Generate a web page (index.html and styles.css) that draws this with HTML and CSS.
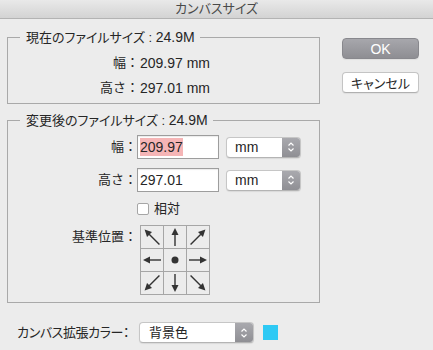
FILE: index.html
```html
<!DOCTYPE html>
<html lang="ja">
<head>
    <meta charset="UTF-8">
    <meta name="viewport" content="width=device-width, initial-scale=1.0">
    <title>カンバスサイズ</title>
    <link rel="stylesheet" href="styles.css">
</head>
<body>
    <div class="titlebar">カンバスサイズ</div>
    <div class="dialog">
        <div class="main">
            <fieldset class="group group-current">
                <legend><span class="kana">現在のファイルサイズ</span> : <span class="num">24.9M</span></legend>
                <div class="info-row">
                    <span class="info-label">幅：</span>
                    <span class="num">209.97 mm</span>
                </div>
                <div class="info-row">
                    <span class="info-label">高さ：</span>
                    <span class="num">297.01 mm</span>
                </div>
            </fieldset>

            <fieldset class="group group-new">
                <legend><span class="kana">変更後のファイルサイズ</span> : <span class="num">24.9M</span></legend>
                <div class="field-row">
                    <label class="field-label">幅：</label>
                    <div class="field"><span class="selected">209.97</span></div>
                    <div class="select select-unit">
                        <span>mm</span>
                        <span class="stepper">
                            <svg width="8" height="12" viewBox="0 0 8 12"><path d="M1.5 4.5L4 2l2.5 2.5M1.5 7.5L4 10l2.5-2.5" fill="none" stroke="#fff" stroke-width="1.2"/></svg>
                        </span>
                    </div>
                </div>
                <div class="field-row">
                    <label class="field-label">高さ：</label>
                    <div class="field"><span>297.01</span></div>
                    <div class="select select-unit">
                        <span>mm</span>
                        <span class="stepper">
                            <svg width="8" height="12" viewBox="0 0 8 12"><path d="M1.5 4.5L4 2l2.5 2.5M1.5 7.5L4 10l2.5-2.5" fill="none" stroke="#fff" stroke-width="1.2"/></svg>
                        </span>
                    </div>
                </div>
                <div class="check-row">
                    <span class="checkbox"></span>
                    <span>相対</span>
                </div>
                <div class="anchor-row">
                    <span class="field-label anchor-label">基準位置：</span>
                    <div class="anchor-grid">
                        <div class="cell"><svg viewBox="0 0 22 22"><g transform="rotate(-45 11 11)"><path d="M11 21.5V7" class="shaft"/><path d="M11 0.5l-3.5 7h7z"/></g></svg></div>
                        <div class="cell"><svg viewBox="0 0 22 22"><path d="M11 20V8" class="shaft"/><path d="M11 2l-3.5 7h7z"/></svg></div>
                        <div class="cell"><svg viewBox="0 0 22 22"><g transform="rotate(45 11 11)"><path d="M11 21.5V7" class="shaft"/><path d="M11 0.5l-3.5 7h7z"/></g></svg></div>
                        <div class="cell"><svg viewBox="0 0 22 22"><g transform="rotate(-90 11 11)"><path d="M11 20V8" class="shaft"/><path d="M11 2l-3.5 7h7z"/></g></svg></div>
                        <div class="cell"><svg viewBox="0 0 22 22"><circle cx="11" cy="11" r="3.5"/></svg></div>
                        <div class="cell"><svg viewBox="0 0 22 22"><g transform="rotate(90 11 11)"><path d="M11 20V8" class="shaft"/><path d="M11 2l-3.5 7h7z"/></g></svg></div>
                        <div class="cell"><svg viewBox="0 0 22 22"><g transform="rotate(-135 11 11)"><path d="M11 21.5V7" class="shaft"/><path d="M11 0.5l-3.5 7h7z"/></g></svg></div>
                        <div class="cell"><svg viewBox="0 0 22 22"><g transform="rotate(180 11 11)"><path d="M11 20V8" class="shaft"/><path d="M11 2l-3.5 7h7z"/></g></svg></div>
                        <div class="cell"><svg viewBox="0 0 22 22"><g transform="rotate(135 11 11)"><path d="M11 21.5V7" class="shaft"/><path d="M11 0.5l-3.5 7h7z"/></g></svg></div>
                    </div>
                </div>
            </fieldset>

            <div class="extend-row">
                <span class="kana extend-label">カンバス拡張カラー：</span>
                <div class="select select-color">
                    <span>背景色</span>
                    <span class="stepper">
                        <svg width="8" height="12" viewBox="0 0 8 12"><path d="M1.5 4.5L4 2l2.5 2.5M1.5 7.5L4 10l2.5-2.5" fill="none" stroke="#fff" stroke-width="1.2"/></svg>
                    </span>
                </div>
                <span class="swatch"></span>
            </div>
        </div>

        <div class="actions">
            <button type="button" class="btn btn-ok">OK</button>
            <button type="button" class="btn"><span class="kana">キャンセル</span></button>
        </div>
    </div>
</body>
</html>
```

FILE: styles.css
```css
body {
    margin: 0;
    width: 433px;
    height: 350px;
    overflow: hidden;
    background: #ececec;
    font-family: "Liberation Sans", "Noto Sans CJK JP", sans-serif;
    font-size: 13px;
    line-height: 16px;
    color: #262626;
}
.kana {
    font-feature-settings: "palt";
}
.num {
    font-size: 14px;
}
.titlebar {
    height: 18px;
    line-height: 18px;
    text-align: center;
    color: #4a4a4a;
    background: linear-gradient(#e9e9e9, #d3d3d3);
    border-bottom: 1px solid #b3b3b3;
    font-feature-settings: "palt";
}
.dialog {
    display: flex;
}
.main {
    width: 313px;
    margin-left: 7px;
}
.group {
    margin: 0;
    padding: 0;
    border: 1px solid #a9a9a9;
}
.group legend {
    margin-left: 12px;
    padding: 0 5px 0 6px;
    line-height: 16px;
}
.group-current {
    margin-top: 10px;
    padding: 9px 0 7px;
}
.group-new {
    margin-top: 8px;
    padding: 6px 0 7px;
}
.info-row {
    display: flex;
    align-items: center;
    height: 16px;
}
.info-row + .info-row {
    margin-top: 9px;
}
.info-label {
    width: 131px;
    text-align: right;
    margin-right: 1px;
}
.field-row {
    display: flex;
    align-items: center;
    height: 24px;
}
.field-row + .field-row {
    margin-top: 9px;
}
.field-label {
    width: 129px;
    text-align: right;
}
.field {
    box-sizing: border-box;
    width: 82px;
    height: 24px;
    padding: 2px 2px;
    background: #fff;
    border: 1px solid #9d9d9d;
    box-shadow: inset 0 1px 1px rgba(0, 0, 0, 0.08);
    font-size: 14px;
    line-height: 18px;
}
.field .selected {
    display: inline-block;
    background: #f5b5b6;
}
.select {
    box-sizing: border-box;
    display: flex;
    align-items: center;
    justify-content: space-between;
    height: 21px;
    background: #fff;
    border: 1px solid #c6c6c6;
    border-bottom-color: #b4b4b4;
    border-radius: 4px;
    box-shadow: 0 1px 1px rgba(0, 0, 0, 0.08);
    overflow: hidden;
}
.select > span:first-child {
    padding-left: 8px;
}
.select-unit {
    width: 75px;
    margin-left: 7px;
    font-size: 14px;
}
.stepper {
    display: flex;
    align-items: center;
    justify-content: center;
    width: 18px;
    height: 100%;
    background: linear-gradient(#a9a9ae, #8f8f94);
}
.check-row {
    display: flex;
    align-items: center;
    height: 16px;
    margin-top: 9px;
    padding-left: 129px;
}
.checkbox {
    box-sizing: border-box;
    width: 12px;
    height: 12px;
    margin-right: 5px;
    background: #fff;
    border: 1px solid #a6a6a6;
    border-radius: 2px;
}
.anchor-row {
    display: flex;
    align-items: flex-start;
    margin-top: 8px;
}
.anchor-label {
    margin-top: 4px;
}
.anchor-grid {
    display: grid;
    grid-template-columns: repeat(3, 22px);
    grid-template-rows: repeat(3, 22px);
    gap: 1px;
    margin-left: 3px;
    padding: 1px;
    background: #a6a6a6;
}
.cell {
    background: #ececec;
}
.cell svg {
    display: block;
    width: 22px;
    height: 22px;
    fill: #333;
}
.cell .shaft {
    fill: none;
    stroke: #333;
    stroke-width: 1.4;
}
.extend-row {
    display: flex;
    align-items: center;
    margin-top: 19px;
    padding-left: 10px;
}
.extend-label {
    width: 122px;
    letter-spacing: -0.4px;
    white-space: nowrap;
}
.select-color {
    width: 115px;
}
.select-color > span:first-child {
    padding-left: 9px;
}
.swatch {
    width: 15px;
    height: 15px;
    margin-left: 9px;
    background: #2ec9f4;
}
.actions {
    display: flex;
    flex-direction: column;
    margin-left: 22px;
    padding-top: 19px;
}
.btn {
    box-sizing: border-box;
    width: 77px;
    height: 21px;
    padding: 0;
    font-family: inherit;
    font-size: 13px;
    color: #262626;
    background: #fff;
    border: 1px solid #c4c4c4;
    border-bottom-color: #b0b0b0;
    border-radius: 4px;
    box-shadow: 0 1px 1px rgba(0, 0, 0, 0.06);
}
.btn + .btn {
    margin-top: 13px;
}
.btn-ok {
    font-size: 14px;
    color: #fff;
    background: linear-gradient(#a7a7ac, #8e8e93);
    border-color: #88888d;
}
```
